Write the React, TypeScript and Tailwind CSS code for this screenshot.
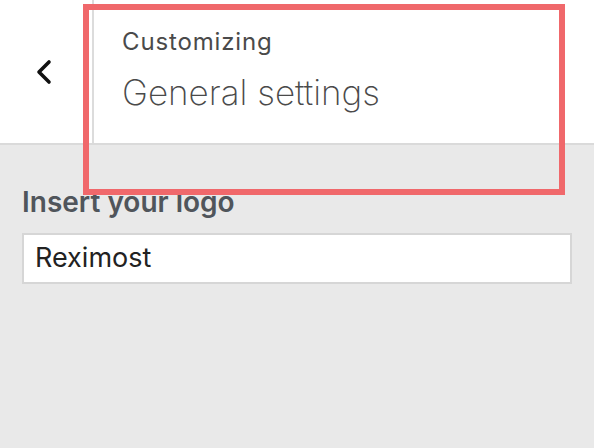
import React from 'react';

export default function App() {
  return (
    <div className="relative w-[594px] h-[448px] overflow-hidden bg-[#e9e9e9] font-['Inter','Liberation_Sans',sans-serif]">
      {/* Header */}
      <header className="flex h-[145px] bg-white border-b-2 border-[#dadada]">
        <div className="flex w-[94px] items-center justify-center border-r-2 border-[#dcdcdc] pr-[4px]">
          <svg width="20" height="28" viewBox="0 0 20 28" fill="none">
            <path d="M15 4 L5 14 L15 24" stroke="#111" strokeWidth="3.6" strokeLinecap="round" strokeLinejoin="round" />
          </svg>
        </div>
        <div className="flex flex-col pl-[28px] pt-[25px]">
          <span className="text-[24px] leading-[34px] text-[#4a4a4a] tracking-[0.85px]">Customizing</span>
          <span className="mt-[10px] text-[35px] leading-[46px] font-extralight text-[#4a4a4a]">General settings</span>
        </div>
      </header>

      {/* Content */}
      <div className="flex flex-col px-[22px] pt-[40px]">
        <label className="text-[28px] leading-[34px] font-semibold text-[#50555b]">Insert your logo</label>
        <div className="mt-[14px] flex h-[51px] w-[550px] items-center border-2 border-[#d6d6d6] bg-white px-[11px]">
          <span className="text-[27px] text-[#222]">Reximost</span>
        </div>
      </div>

      {/* Annotation box */}
      <div className="absolute left-[83px] top-[4px] w-[482px] h-[191px] border-[6px] border-[#f0686b]" />
    </div>
  );
}
